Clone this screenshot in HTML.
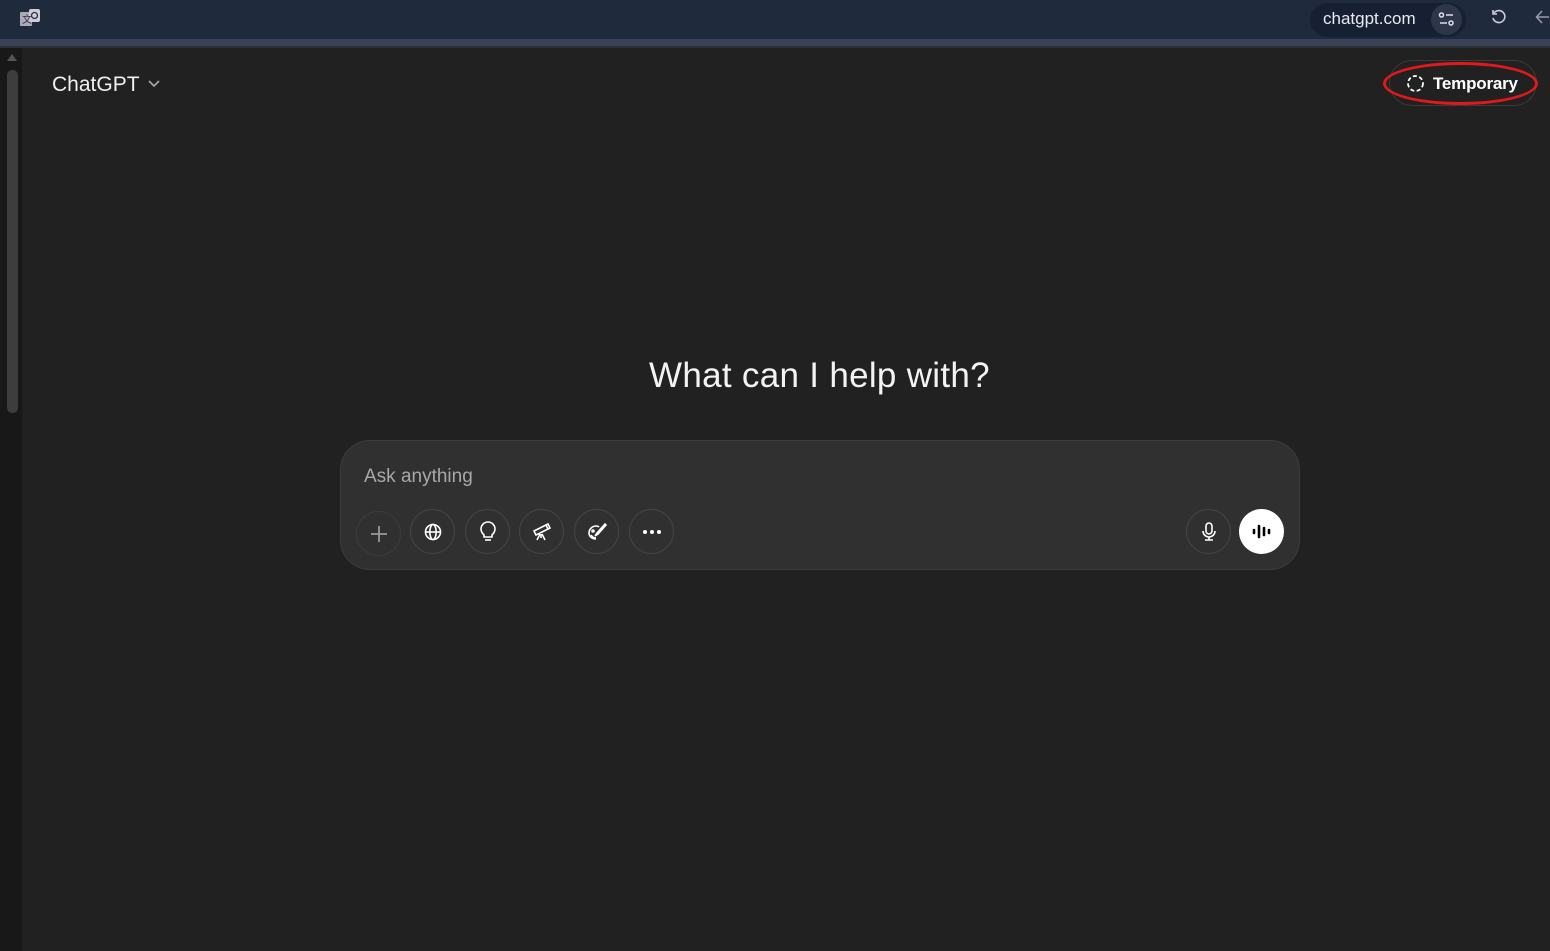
<!DOCTYPE html>
<html><head><style>
body{margin:0;width:1550px;height:951px;background:#212121;font-family:"Liberation Sans",sans-serif;overflow:hidden;position:relative}
.top{position:absolute;left:0;top:0;width:1550px;height:39px;background:#1f2a3d}
.top2{position:absolute;left:0;top:39px;width:1550px;height:7px;background:#3a4356}
.top3{position:absolute;left:0;top:46px;width:1550px;height:2px;background:#2b2f36}
.url{position:absolute;left:1310px;top:3px;width:156px;height:34px;background:#172033;border-radius:17px}
.side{position:absolute;left:0;top:48px;width:22px;height:903px;background:#181818}
.thumb{position:absolute;left:7px;top:70px;width:11px;height:343px;background:#3d3d3d;border-radius:5px}
.t{position:absolute;color:#fff}
.circ{position:absolute;width:45px;height:45px;border:1px solid #454545;border-radius:50%;box-sizing:border-box;display:flex;align-items:center;justify-content:center}
</style></head><body>
<div class="top"></div><div class="top2"></div><div class="top3"></div>
<div class="url"></div>
<svg style="position:absolute;left:19px;top:8px" width="22" height="22" viewBox="0 0 22 22"><rect x="1" y="4" width="12" height="14" fill="#aab" rx="1"/><rect x="10" y="1" width="11" height="13" fill="#ccd" rx="2"/><circle cx="15.5" cy="7.5" r="3" fill="none" stroke="#334" stroke-width="1.3"/><text x="3" y="15" font-size="10" fill="#334">文</text></svg>
<div class="t" style="left:1323px;top:9px;font-size:17px;color:#e8eaf0">chatgpt.com</div>
<div style="position:absolute;left:1431px;top:4px;width:31px;height:31px;border-radius:50%;background:#2e374a"></div>
<svg style="position:absolute;left:1438px;top:11px" width="17" height="17" viewBox="0 0 17 17" fill="none" stroke="#dde" stroke-width="1.5"><circle cx="3.5" cy="4" r="2"/><line x1="8" y1="4" x2="15" y2="4"/><circle cx="13" cy="12" r="2"/><line x1="2" y1="12" x2="9" y2="12"/></svg>
<svg style="position:absolute;left:1490px;top:8px" width="18" height="18" viewBox="0 0 18 18" fill="none" stroke="#ccd" stroke-width="1.6"><path d="M4 5A6 6 0 1 1 3 10"/><path d="M3 2v4h4"/></svg>
<svg style="position:absolute;left:1535px;top:9px" width="15" height="16" viewBox="0 0 15 16" fill="none" stroke="#99a" stroke-width="1.6"><path d="M14 8H2M7 2L1.5 8 7 14"/></svg>
<div class="side"><div class="thumb" style="top:22px"></div></div>
<svg style="position:absolute;left:6px;top:53px" width="12" height="9"><path d="M6 1L11 8H1Z" fill="#555"/></svg>
<div class="t" style="left:52px;top:73px;font-size:21px;color:#f0f0f0">ChatGPT</div>
<svg style="position:absolute;left:147px;top:79px" width="14" height="10" fill="none" stroke="#aaa" stroke-width="1.6"><path d="M2 2l5 5 5-5"/></svg>
<div style="position:absolute;left:1389px;top:60px;width:148px;height:46px;border:1px solid #3a3a3a;border-radius:23px;box-sizing:border-box"></div>
<div style="position:absolute;left:1383px;top:62px;width:155px;height:43px;border:3px solid #e0191c;border-radius:50%;box-sizing:border-box"></div>
<svg style="position:absolute;left:1406px;top:74px" width="19" height="19" fill="none" stroke="#fff" stroke-width="1.8" stroke-dasharray="4 2.5"><circle cx="9.5" cy="9.5" r="7.5"/></svg>
<div class="t" style="left:1433px;top:74px;font-size:17px;font-weight:bold;letter-spacing:-0.2px">Temporary</div>
<div class="t" style="left:649px;top:356px;font-size:35px;color:#f3f3f3;letter-spacing:0.3px">What can I help with?</div>
<div style="position:absolute;left:340px;top:440px;width:960px;height:130px;background:#303030;border:1px solid #3c3c3c;border-radius:30px;box-sizing:border-box"></div>
<div class="t" style="left:364px;top:466px;font-size:19px;color:#a8a8a8">Ask anything</div>
<div class="circ" style="left:356px;top:511px;border-color:#3c3c3c"><svg width="22" height="22" stroke="#999" stroke-width="1.8"><path d="M11 3v16M3 11h16"/></svg></div>
<div class="circ" style="left:410px;top:509px"><svg width="20" height="20" fill="none" stroke="#fff" stroke-width="1.6"><circle cx="10" cy="10" r="7.5"/><ellipse cx="10" cy="10" rx="3.2" ry="7.5"/><path d="M2.5 10h15"/></svg></div>
<div class="circ" style="left:465px;top:509px"><svg width="20" height="22" fill="none" stroke="#fff" stroke-width="1.6"><path d="M6 14c-2-2-3-3.5-3-6a7 7 0 0 1 14 0c0 2.5-1 4-3 6v2H6z"/><path d="M7 19h6"/></svg></div>
<div class="circ" style="left:519px;top:509px"><svg width="22" height="22" fill="none" stroke="#fff" stroke-width="1.6"><path d="M3 10l12-6 2 4-12 6z"/><path d="M9 13l-3 6M11 13l3 6M10 13v4"/><path d="M15 4l2-1 2 4-2 1"/></svg></div>
<div class="circ" style="left:574px;top:509px"><svg width="22" height="22" fill="none" stroke="#fff" stroke-width="1.6"><path d="M10 18c-4 0-7-2.5-7-6s3-7 7-7c2 0 3 1 3 1"/><path d="M19 3l-8 9-2 3 3-2 8-9z"/><circle cx="7" cy="10" r="1"/><path d="M5 14c1 2 3 3 5 3"/></svg></div>
<div class="circ" style="left:629px;top:509px"><svg width="22" height="6" fill="#fff"><circle cx="4" cy="3" r="2"/><circle cx="11" cy="3" r="2"/><circle cx="18" cy="3" r="2"/></svg></div>
<div class="circ" style="left:1186px;top:509px"><svg width="20" height="22" fill="none" stroke="#fff" stroke-width="1.6"><rect x="7" y="2" width="6" height="11" rx="3"/><path d="M4 10a6 6 0 0 0 12 0M10 16v3M6 19h8"/></svg></div>
<div style="position:absolute;left:1239px;top:509px;width:45px;height:45px;border-radius:50%;background:#fff"></div>
<svg style="position:absolute;left:1251px;top:521px" width="21" height="21" stroke="#000" stroke-width="2.6" stroke-linecap="round"><path d="M3 9v3M8 5v11M13 7v7M18 9v3"/></svg>
</body></html>
